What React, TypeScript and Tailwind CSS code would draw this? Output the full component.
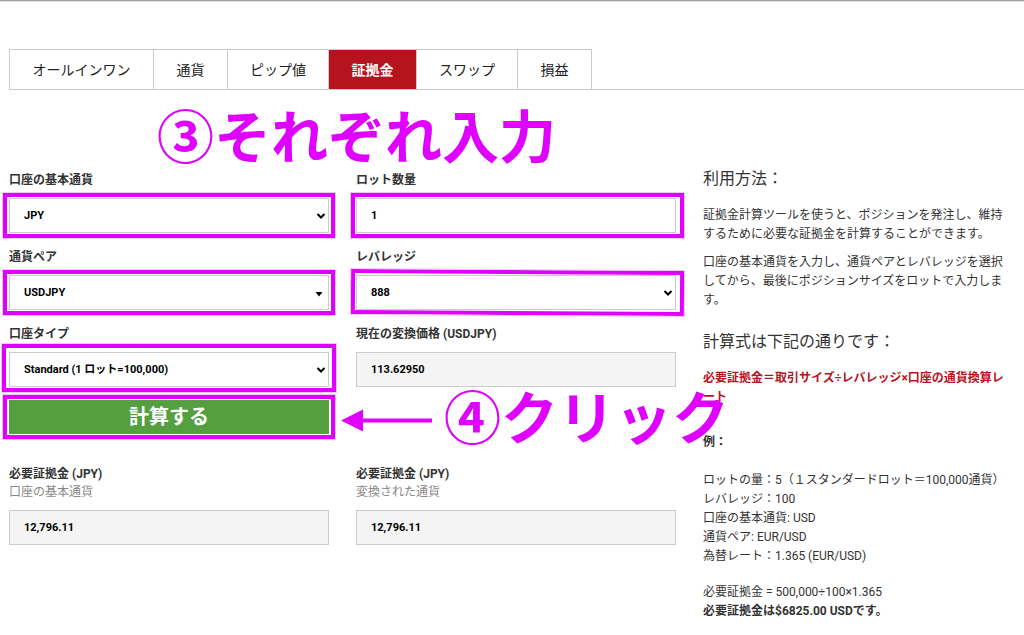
import { useState } from 'react';
import type { ReactNode } from 'react';

const TABS = [
    { label: 'オールインワン', width: 'w-[145px]' },
    { label: '通貨', width: 'w-[74px]' },
    { label: 'ピップ値', width: 'w-[101px]' },
    { label: '証拠金', width: 'w-[88px]' },
    { label: 'スワップ', width: 'w-[101px]' },
    { label: '損益', width: 'w-[74px]' },
];

const CONTROL =
    'block h-[35px] w-full appearance-none rounded-none border border-[#ccc] pl-[14px] pr-8 text-[11px] font-bold text-black outline-none';

// Marco rosa que resalta un control
const Marker = ({ className }: { className: string }) => (
    <span
        className={`pointer-events-none absolute border-4 border-[#df00ff] outline outline-1 outline-[#f0c8f5] ${className}`}
    />
);

const Chevron = () => (
    <svg className="pointer-events-none absolute right-[3px] top-[14px] h-2 w-[10px]" viewBox="0 0 10 8" fill="none">
        <path d="M1.5 2 L5 5.5 L8.5 2" stroke="#000" strokeWidth="2" />
    </svg>
);

const Caret = () => (
    <svg className="pointer-events-none absolute right-[6px] top-[15px] h-2 w-2" viewBox="0 0 8 8">
        <path d="M0.5 2 H7.5 L4 6.5 Z" fill="#000" />
    </svg>
);

const Field = ({ id, label, note, children }: { id: string; label: string; note?: string; children: ReactNode }) => (
    <div>
        <label htmlFor={id} className="block text-xs leading-[18px] font-bold text-[#333]">
            {label}
        </label>
        {note && <p className="text-xs leading-[18px] text-[#888]">{note}</p>}
        <div className="relative mt-[9px]">{children}</div>
    </div>
);

const Select = ({ id, options, caret }: { id: string; options: string[]; caret?: boolean }) => {
    const [value, setValue] = useState(options[0]);

    return (
        <>
            <select
                id={id}
                value={value}
                onChange={(e) => setValue(e.target.value)}
                className={`${CONTROL} bg-white pt-[2px]`}
            >
                {options.map((option) => (
                    <option key={option}>{option}</option>
                ))}
            </select>
            {caret ? <Caret /> : <Chevron />}
        </>
    );
};

const Result = ({ id, value }: { id: string; value: string }) => (
    <input id={id} type="text" readOnly value={value} className={`${CONTROL} bg-[#f4f4f4]`} />
);

const Guide = () => (
    <aside className="pt-px pr-1 text-xs leading-[19px] text-[#333]">
        <h2 className="text-base leading-6">利用方法：</h2>
        <p className="mt-[15px]">
            証拠金計算ツールを使うと、ポジションを発注し、維持するために必要な証拠金を計算することができます。
        </p>
        <p className="mt-[9px]">
            口座の基本通貨を入力し、通貨ペアとレバレッジを選択してから、最後にポジションサイズをロットで入力します。
        </p>
        <h2 className="mt-5 text-base leading-6">計算式は下記の通りです：</h2>
        <p className="mt-[15px] font-bold text-[#b7141e]">必要証拠金＝取引サイズ÷レバレッジ×口座の通貨換算レート</p>
        <p className="mt-[26px] font-bold">例：</p>
        <p className="mt-[19px]">
            ロットの量：5（１スタンダードロット＝100,000通貨）
            <br />
            レバレッジ：100
            <br />
            口座の基本通貨: USD
            <br />
            通貨ペア: EUR/USD
            <br />
            為替レート：1.365 (EUR/USD)
        </p>
        <p className="mt-[17px]">
            必要証拠金 = 500,000÷100×1.365
            <br />
            <strong>必要証拠金は$6825.00 USDです。</strong>
        </p>
    </aside>
);

const App = () => {
    const [activeTab, setActiveTab] = useState('証拠金');
    const [lots, setLots] = useState('1');

    return (
        <div
            lang="ja"
            className="overflow-x-hidden border-t border-[#a0a0a0] bg-white pt-12 font-['Roboto','Noto_Sans_CJK_JP',sans-serif] text-[#333] shadow-[inset_0_1px_0_#e2e2e2]"
        >
            {/* Pestañas */}
            <nav className="ml-[9px] flex border-b border-[#ccc]">
                {TABS.map((tab) => (
                    <button
                        key={tab.label}
                        type="button"
                        onClick={() => setActiveTab(tab.label)}
                        className={`h-10 border-t border-r border-[#ccc] text-sm first:border-l ${tab.width} ${
                            activeTab === tab.label ? 'bg-[#b5141e] font-bold text-white' : 'bg-white text-[#222]'
                        }`}
                    >
                        {tab.label}
                    </button>
                ))}
            </nav>

            <p className="flex h-[76px] items-center pt-5 pl-[157px] text-[57px] leading-none font-bold whitespace-nowrap text-[#df00ff]">
                ③それぞれ入力
            </p>

            <main className="grid grid-cols-[667fr_312fr] gap-x-[27px] px-[9px] pb-4">
                <form className="pt-[5px]" onSubmit={(e) => e.preventDefault()}>
                    <div className="grid grid-cols-2 gap-x-[27px] gap-y-[15px]">
                        <Field id="base" label="口座の基本通貨">
                            <Select id="base" options={['JPY', 'USD', 'EUR']} />
                            <Marker className="-inset-x-[6px] -inset-y-[5px]" />
                        </Field>
                        <Field id="lots" label="ロット数量">
                            <input
                                id="lots"
                                type="text"
                                value={lots}
                                onChange={(e) => setLots(e.target.value)}
                                className={`${CONTROL} bg-white`}
                            />
                            <Marker className="-inset-y-[5px] -right-2 -left-[5px]" />
                        </Field>
                        <Field id="pair" label="通貨ペア">
                            <Select id="pair" options={['USDJPY', 'EURUSD', 'EURJPY']} caret />
                            <Marker className="-inset-x-[6px] -inset-y-[5px]" />
                        </Field>
                        <Field id="leverage" label="レバレッジ">
                            <Select id="leverage" options={['888', '500', '100']} />
                            <Marker className="-inset-y-[5px] -right-2 -left-[5px] rotate-[0.35deg]" />
                        </Field>
                        <Field id="type" label="口座タイプ">
                            <Select id="type" options={['Standard (1 ロット=100,000)', 'Micro (1 ロット=1,000)']} />
                            <Marker className="-inset-x-[7px] -top-2 -bottom-[5px]" />
                        </Field>
                        <Field id="rate" label="現在の変換価格 (USDJPY)">
                            <Result id="rate" value="113.62950" />
                        </Field>
                    </div>

                    <div className="mt-[13px] grid grid-cols-2 gap-x-[27px]">
                        <div className="relative">
                            <button
                                type="submit"
                                className="block h-[34px] w-full bg-[#54a041] text-xl leading-none font-bold text-white"
                            >
                                計算する
                            </button>
                            <Marker className="-inset-x-[6px] -inset-y-[5px]" />
                            <div className="pointer-events-none absolute top-1/2 left-full ml-3 flex -translate-y-1/2 items-center gap-3 pt-1 text-[57px] leading-none font-bold whitespace-nowrap text-[#df00ff]">
                                <svg className="h-6 w-[91px]" viewBox="0 0 91 24" fill="currentColor">
                                    <path d="M0 13 L22 2 V11 H91 V15 H22 V24 Z" />
                                </svg>
                                <span>④クリック</span>
                            </div>
                        </div>
                    </div>

                    {/* Resultados */}
                    <div className="mt-[31px] grid grid-cols-2 gap-x-[27px]">
                        <Field id="required" label="必要証拠金 (JPY)" note="口座の基本通貨">
                            <Result id="required" value="12,796.11" />
                        </Field>
                        <Field id="converted" label="必要証拠金 (JPY)" note="変換された通貨">
                            <Result id="converted" value="12,796.11" />
                        </Field>
                    </div>
                </form>

                <Guide />
            </main>
        </div>
    );
};

export default App;
